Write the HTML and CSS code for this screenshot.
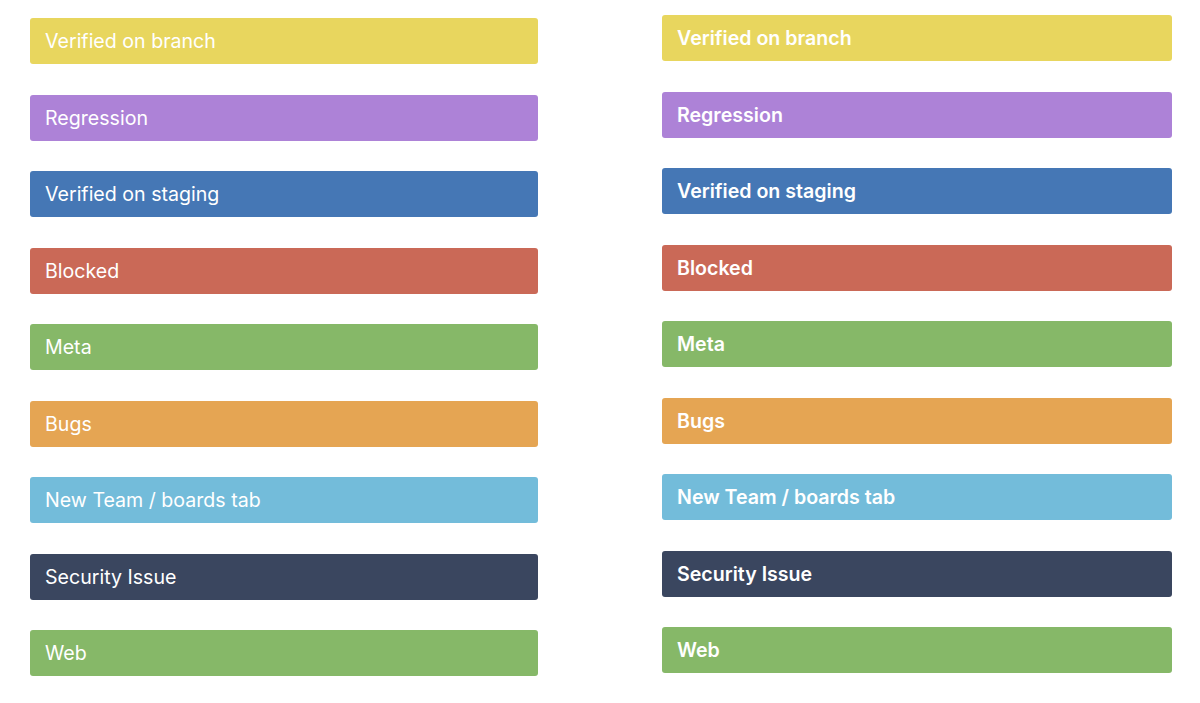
FILE: index.html
```html
<!DOCTYPE html>
<html>
<head>
<meta charset="utf-8">
<link rel="stylesheet" href="styles.css">
</head>
<body>
<div class="board">
  <div class="col col-left">
    <div class="label yellow">Verified on branch</div>
    <div class="label purple">Regression</div>
    <div class="label blue">Verified on staging</div>
    <div class="label red">Blocked</div>
    <div class="label green">Meta</div>
    <div class="label orange">Bugs</div>
    <div class="label sky">New Team / boards tab</div>
    <div class="label navy">Security Issue</div>
    <div class="label green">Web</div>
  </div>
  <div class="col col-right">
    <div class="label yellow">Verified on branch</div>
    <div class="label purple">Regression</div>
    <div class="label blue">Verified on staging</div>
    <div class="label red">Blocked</div>
    <div class="label green">Meta</div>
    <div class="label orange">Bugs</div>
    <div class="label sky">New Team / boards tab</div>
    <div class="label navy">Security Issue</div>
    <div class="label green">Web</div>
  </div>
</div>
</body>
</html>
```

FILE: styles.css
```css
html, body {
  margin: 0;
  padding: 0;
  background: #ffffff;
}
body {
  font-family: Inter, "Liberation Sans", Arial, sans-serif;
  width: 1200px;
  height: 703px;
  overflow: hidden;
}
.board {
  display: flex;
  gap: 124px;
  padding-left: 30px;
}
.col {
  display: flex;
  flex-direction: column;
  gap: 30.5px;
}
.col-left {
  width: 508px;
  padding-top: 18px;
}
.col-right {
  width: 510px;
  padding-top: 15px;
}
.label {
  height: 46px;
  line-height: 46px;
  padding-left: 15px;
  border-radius: 3px;
  color: #ffffff;
  font-size: 19.6px;
  font-weight: 400;
  white-space: nowrap;
}
.col-right .label {
  font-weight: 600;
}
.yellow { background: #e8d65e; }
.purple { background: #ad82d7; }
.blue { background: #4577b5; }
.red { background: #ca6957; }
.green { background: #86b868; }
.orange { background: #e5a553; }
.sky { background: #73bcda; }
.navy { background: #3a465f; }
```
